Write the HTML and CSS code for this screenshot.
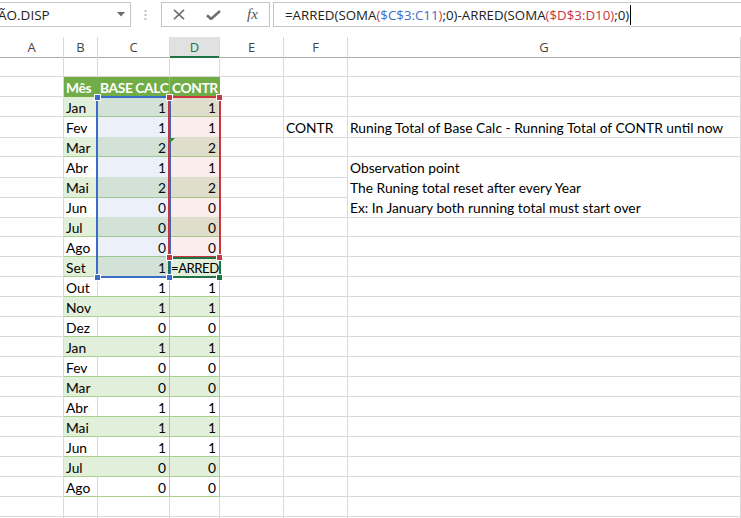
FILE: index.html
```html
<!DOCTYPE html>
<html lang="pt">
<head>
<meta charset="utf-8">
<title>Planilha</title>
<link rel="stylesheet" href="styles.css">
</head>
<body>
<div class="toolbar">
  <div class="namebox">
    <span class="name">ÃO.DISP</span>
    <svg class="dd" width="8" height="5" viewBox="0 0 8 5"><path d="M0 0H8L4 4.5Z" fill="#6b6b6b"/></svg>
  </div>
  <div class="dots">
    <svg width="3" height="10" viewBox="0 0 3 10"><rect x="0.5" y="0" width="2" height="2" fill="#c2c2c2"/><rect x="0.5" y="4" width="2" height="2" fill="#c2c2c2"/><rect x="0.5" y="8" width="2" height="2" fill="#c2c2c2"/></svg>
  </div>
  <div class="fxbox">
    <span class="slot"><svg width="12" height="11" viewBox="0 0 12 11"><path d="M1 0.8L11 10.2M11 0.8L1 10.2" stroke="#6f6f6f" stroke-width="1.6" fill="none"/></svg></span>
    <span class="slot"><svg width="15" height="10" viewBox="0 0 15 10"><path d="M1 5.2L5 9L14 1" stroke="#707070" stroke-width="2.6" fill="none"/></svg></span>
    <span class="slot fx">fx</span>
  </div>
  <div class="formula">
    <span>=ARRED(SOMA</span><span class="par">(</span><span class="rb">$C$3:C11</span><span class="par">)</span><span>;0)-ARRED(SOMA</span><span class="par">(</span><span class="rr">$D$3:D10</span><span class="par">)</span><span>;0)</span><span class="caret"></span>
  </div>
</div>

<div class="sheet">
  <div class="hdr">
    <div>A</div><div>B</div><div>C</div><div class="sel">D</div><div>E</div><div>F</div><div>G</div>
  </div>

  <div class="row"><div></div><div></div><div></div><div></div><div></div><div></div><div></div></div>
  <div class="row thead"><div></div><div class="tb">Mês</div><div class="tc">BASE CALC</div><div class="td">CONTR</div><div></div><div></div><div></div></div>
  <div class="row band"><div></div><div class="tb">Jan</div><div class="tc num">1</div><div class="td num">1</div><div></div><div></div><div></div></div>
  <div class="row"><div></div><div class="tb">Fev</div><div class="tc num">1</div><div class="td num">1</div><div></div><div class="txt">CONTR</div><div class="txt">Runing Total of Base Calc - Running Total of CONTR until now</div></div>
  <div class="row band"><div></div><div class="tb">Mar</div><div class="tc num">2</div><div class="td num">2</div><div></div><div></div><div></div></div>
  <div class="row"><div></div><div class="tb">Abr</div><div class="tc num">1</div><div class="td num">1</div><div></div><div></div><div class="txt nobot">Observation point</div></div>
  <div class="row band"><div></div><div class="tb">Mai</div><div class="tc num">2</div><div class="td num">2</div><div></div><div></div><div class="txt nobot">The Runing total reset after every Year</div></div>
  <div class="row"><div></div><div class="tb">Jun</div><div class="tc num">0</div><div class="td num">0</div><div></div><div></div><div class="txt">Ex: In January both running total must start over</div></div>
  <div class="row band"><div></div><div class="tb">Jul</div><div class="tc num">0</div><div class="td num">0</div><div></div><div></div><div></div></div>
  <div class="row"><div></div><div class="tb">Ago</div><div class="tc num">0</div><div class="td num">0</div><div></div><div></div><div></div></div>
  <div class="row band"><div></div><div class="tb">Set</div><div class="tc num">1</div><div class="td edit">=ARRED</div><div></div><div></div><div></div></div>
  <div class="row"><div></div><div class="tb">Out</div><div class="tc num">1</div><div class="td num">1</div><div></div><div></div><div></div></div>
  <div class="row band"><div></div><div class="tb">Nov</div><div class="tc num">1</div><div class="td num">1</div><div></div><div></div><div></div></div>
  <div class="row"><div></div><div class="tb">Dez</div><div class="tc num">0</div><div class="td num">0</div><div></div><div></div><div></div></div>
  <div class="row band"><div></div><div class="tb">Jan</div><div class="tc num">1</div><div class="td num">1</div><div></div><div></div><div></div></div>
  <div class="row"><div></div><div class="tb">Fev</div><div class="tc num">0</div><div class="td num">0</div><div></div><div></div><div></div></div>
  <div class="row band"><div></div><div class="tb">Mar</div><div class="tc num">0</div><div class="td num">0</div><div></div><div></div><div></div></div>
  <div class="row"><div></div><div class="tb">Abr</div><div class="tc num">1</div><div class="td num">1</div><div></div><div></div><div></div></div>
  <div class="row band"><div></div><div class="tb">Mai</div><div class="tc num">1</div><div class="td num">1</div><div></div><div></div><div></div></div>
  <div class="row"><div></div><div class="tb">Jun</div><div class="tc num">1</div><div class="td num">1</div><div></div><div></div><div></div></div>
  <div class="row band"><div></div><div class="tb">Jul</div><div class="tc num">0</div><div class="td num">0</div><div></div><div></div><div></div></div>
  <div class="row"><div></div><div class="tb">Ago</div><div class="tc num">0</div><div class="td num">0</div><div></div><div></div><div></div></div>
  <div class="row"><div></div><div></div><div></div><div></div><div></div><div></div><div></div></div>
  <div class="row"><div></div><div></div><div></div><div></div><div></div><div></div><div></div></div>

  <div class="ref ref-c"></div>
  <div class="ref ref-d"></div>
  <div class="active"></div>
  <span class="errtri"></span>
  <span class="h h-blue h1"></span>
  <span class="h h-blue h2"></span>
  <span class="h h-blue h3"></span>
  <span class="h h-red h4"></span>
  <span class="h h-red h5"></span>
  <span class="h h-red h6"></span>
  <span class="h h-red h7"></span>
  <span class="h h-green h8"></span>
</div>
</body>
</html>
```

FILE: styles.css
```css
* { box-sizing: border-box; }

body {
  margin: 0;
  width: 741px;
  height: 518px;
  overflow: hidden;
  background: #fff;
  font-family: Lato, "Liberation Sans", sans-serif;
  color: #000;
}

/* ---------- formula bar ---------- */
.toolbar {
  height: 37px;
  display: flex;
  align-items: flex-start;
  padding-top: 2px;
  overflow: hidden;
}

.namebox {
  margin-left: -1px;
  width: 132px;
  height: 25px;
  border: 1px solid #c6c6c6;
  display: flex;
  align-items: center;
  justify-content: space-between;
  padding-right: 5px;
  font-family: "Open Sans", "Noto Sans", sans-serif;
  font-size: 13.5px;
  color: #222;
}
.namebox .name { margin-left: -2px; }

.dots {
  width: 30px;
  height: 25px;
  display: flex;
  align-items: center;
  justify-content: center;
  padding-right: 1px;
}

.fxbox {
  width: 109px;
  height: 25px;
  border: 1px solid #c6c6c6;
  display: flex;
  align-items: center;
}
.fxbox .slot {
  width: 34px;
  height: 23px;
  display: flex;
  align-items: center;
  justify-content: center;
}
.fxbox .fx {
  width: 39px;
  padding-left: 6px;
  font-family: "Liberation Serif", serif;
  font-style: italic;
  font-size: 15px;
  color: #555;
}

.formula {
  flex: 1;
  margin-left: 3px;
  margin-right: -2px;
  height: 25px;
  border: 1px solid #c6c6c6;
  padding-left: 11px;
  display: flex;
  align-items: center;
  white-space: nowrap;
  font-family: "Open Sans", "Noto Sans", sans-serif;
  font-size: 13.3px;
  color: #222;
}
.formula .par { color: #d23a4e; }
.formula .rb { color: #3b6cc7; }
.formula .rr { color: #c8363e; }
.formula .caret {
  display: inline-block;
  width: 1px;
  height: 20px;
  background: #000;
  margin-left: 1px;
}

/* ---------- sheet ---------- */
.sheet { position: relative; }

.hdr,
.row {
  display: grid;
  grid-template-columns: 64px 34px 72px 50px 64px 64px 1fr;
  height: 20px;
}

.hdr > div {
  border-right: 1px solid #d9d9d9;
  border-bottom: 1px solid #ababab;
  padding-top: 1px;
  text-align: center;
  font-family: "Open Sans", "Noto Sans", sans-serif;
  font-size: 13px;
  line-height: 18px;
  color: #444;
}
.hdr > .sel {
  background: #e1e1e1;
  color: #217346;
  border-bottom: 2px solid #217346;
}

.row > div {
  border-right: 1px solid #d9d9d9;
  border-bottom: 1px solid #d9d9d9;
  padding: 2px 3px 0 2px;
  font-size: 13.8px;
  line-height: 18px;
  white-space: nowrap;
  overflow: hidden;
}
.row > .txt { overflow: visible; }
.row > .nobot { border-bottom-color: #fff; }

.row > .tb,
.row > .tc,
.row > .td { border-bottom-color: #a9d08e; }
.row > .tc,
.row > .td { border-right-color: #a9d08e; }
.row > .num { text-align: right; }

.band > .tb,
.band > .tc,
.band > .td { background: #e2efda; }
.band > .tb { border-right-color: #e2efda; }

.thead > .tb,
.thead > .tc,
.thead > .td {
  background: #70ad47;
  color: #fff;
  font-weight: bold;
  letter-spacing: -0.4px;
  border-right-color: #70ad47;
  border-bottom-color: #70ad47;
}
.thead > .tc { border-right-color: #8cc06a; }

.row > .edit {
  padding-left: 1px;
  padding-right: 0;
  font-size: 13.2px;
  letter-spacing: -0.5px;
}

/* ---------- reference highlights (overlays) ---------- */
.ref {
  position: absolute;
  border: 2px solid;
}
.ref-c {
  left: 96px;
  top: 59px;
  width: 75px;
  height: 182px;
  border-color: #3b6cc7;
  background: rgba(68, 114, 196, 0.1);
}
.ref-d {
  left: 168px;
  top: 59px;
  width: 53px;
  height: 162px;
  border-color: #c8363e;
  background: rgba(200, 54, 62, 0.09);
}
.active {
  position: absolute;
  left: 168px;
  top: 220px;
  width: 53px;
  height: 21px;
  border: 2px solid #217346;
}

.errtri {
  position: absolute;
  left: 170px;
  top: 101px;
  width: 0;
  height: 0;
  border-top: 5px solid #2f8a3d;
  border-right: 5px solid transparent;
}

.h {
  position: absolute;
  width: 7px;
  height: 7px;
  border: 1px solid #fff;
}
.h-blue { background: #3b6cc7; }
.h-red { background: #c8363e; }
.h-green { background: #217346; }
.h1 { left: 94px; top: 57px; }
.h2 { left: 94px; top: 237px; }
.h3 { left: 166px; top: 237px; }
.h4 { left: 166px; top: 57px; }
.h5 { left: 216px; top: 57px; }
.h6 { left: 166px; top: 217px; }
.h7 { left: 216px; top: 217px; }
.h8 { left: 216px; top: 237px; }
```
